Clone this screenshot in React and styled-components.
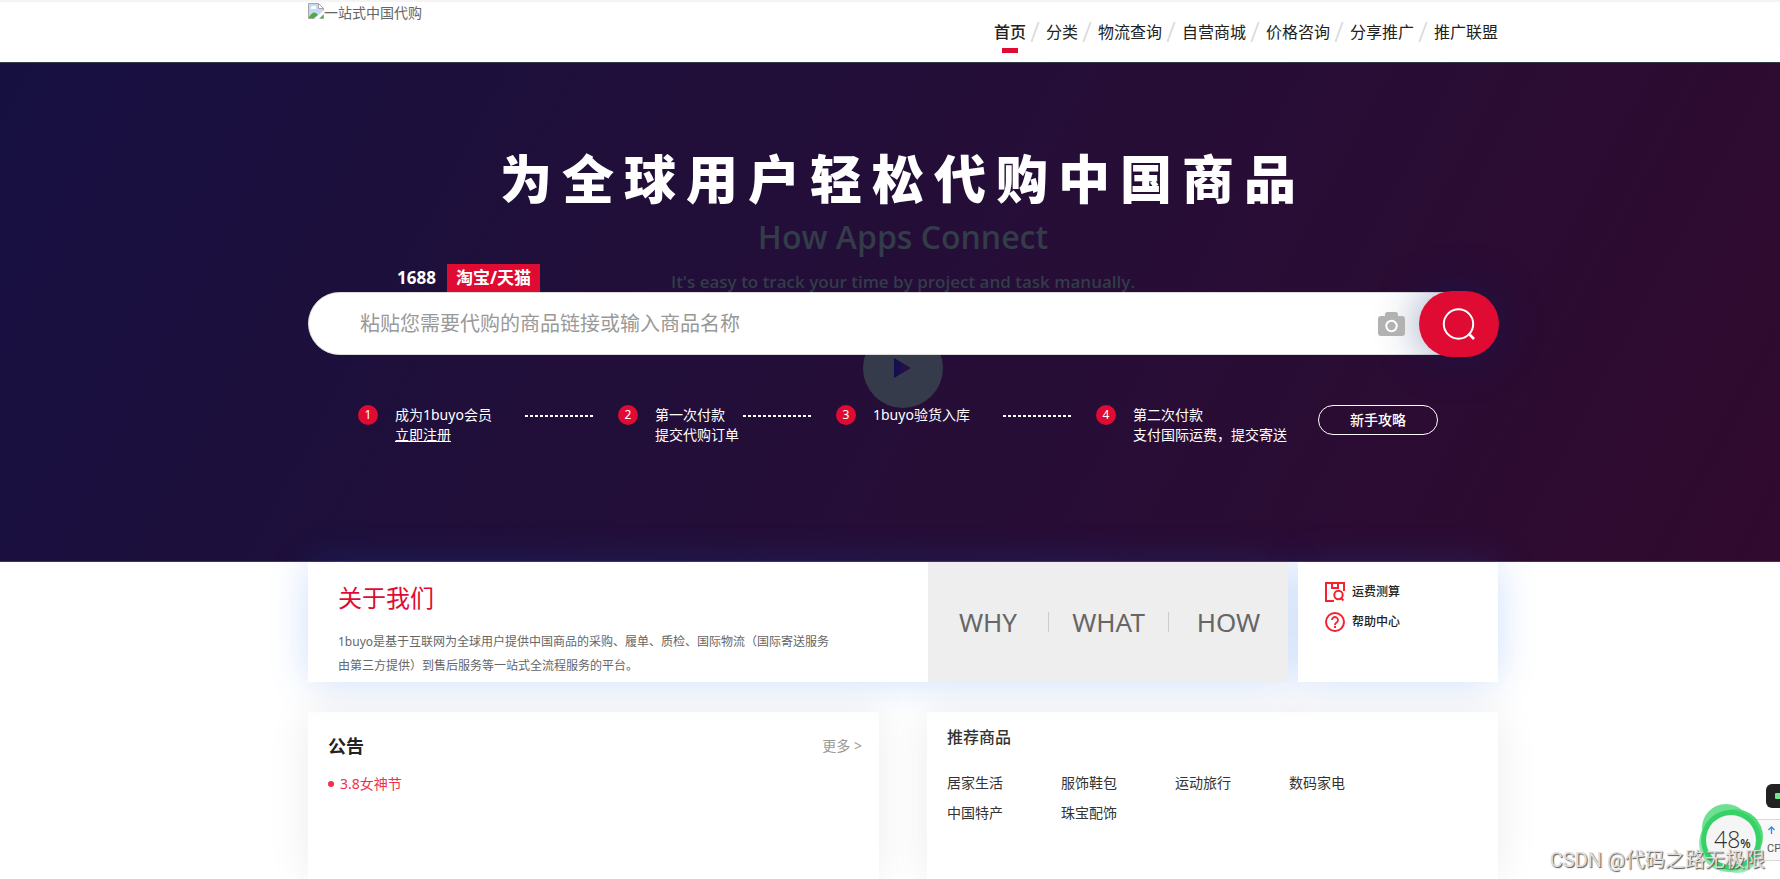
import styled, { createGlobalStyle } from 'styled-components';
import { useState } from 'react';


const GlobalStyle = createGlobalStyle`
    * {
        box-sizing: border-box;
    }
    body {
        margin: 0;
        background-color: #fff;
        color: #333;
        font-family: "Noto Sans", "Noto Sans CJK SC", sans-serif;
        font-size: 14px;
        line-height: 20px;
    }
    a {
        color: inherit;
        text-decoration: none;
    }
    h1, h2, h3, p, ul, ol {
        margin: 0;
        padding: 0;
        list-style: none;
        font-weight: normal;
    }
    button, input {
        font: inherit;
        border: 0;
        padding: 0;
        background: none;
    }
    button {
        cursor: pointer;
    }
`

const Page = styled.div`
    display: flex;
    flex-direction: column;
    min-height: 100vh;
    overflow: hidden;
    position: relative;
`

/* the content column sits a little right of centre */
const Shell = styled.div`
    padding-left: 26px;
    display: flex;
    flex-direction: column;
    flex: ${(props) => (props.$grow ? '1' : 'none')};
`

const Column = styled.div`
    width: 100%;
    max-width: 1190px;
    margin: 0 auto;
`

const Header = styled.header`
    border-top: 2px solid #f4f4f4;
    height: 62px;
`

const HeaderInner = styled(Column)`
    display: flex;
    justify-content: space-between;
`

const Logo = styled.a`
    display: flex;
    font-size: 14px;
    line-height: 22px;
    color: #666;
    svg {
        margin-top: 1px;
    }
`

const Nav = styled.nav`
    display: flex;
    gap: 20px;
    padding-top: 18px;
    font-size: 16px;
    line-height: 24px;
`

const NavLink = styled.a`
    position: relative;
    color: #222;
    font-weight: ${(props) => (props.$active ? 500 : 400)};
    &:not(:first-child)::before {
        content: '';
        position: absolute;
        left: -12px;
        top: 2px;
        width: 2px;
        height: 20px;
        background-color: #ddd;
        transform: skewX(-20deg);
    }
    &::after {
        content: '';
        display: ${(props) => (props.$active ? 'block' : 'none')};
        position: absolute;
        left: 8px;
        bottom: -9px;
        width: 16px;
        height: 5px;
        background-color: #e00b32;
    }
`

const Hero = styled.section`
    position: relative;
    height: 500px;
    border-top: 1px solid #353b4a;
    border-bottom: 1px solid #353b4a;
    background: linear-gradient(118deg, #161042 0%, #1f0f3a 30%, #270d36 62%, #310a2e 100%);
    color: #fff;
`

const Backdrop = styled.div`
    position: absolute;
    inset: 0;
    padding: 151px 0 0 26px;
    display: flex;
    flex-direction: column;
    align-items: center;
    color: #333c49;
    font-family: "Open Sans", sans-serif;
    font-weight: 600;
    svg {
        margin-top: 32px;
    }
`

const BackdropTitle = styled.div`
    font-size: 32px;
    line-height: 46px;
`

const BackdropText = styled.div`
    margin-top: 8px;
    font-size: 17px;
    line-height: 28px;
`

const HeroShell = styled(Shell)`
    position: relative;
`

const Title = styled.h1`
    padding-top: 78px;
    font-size: 52px;
    line-height: 76px;
    font-weight: 900;
    letter-spacing: 10px;
    text-align: center;
`

const Tabs = styled.div`
    display: flex;
    gap: 2px;
    margin-top: 47px;
    padding-left: 80px;
`

const Tab = styled.button`
    height: 28px;
    padding: 0 9px;
    color: #fff;
    font-size: 17px;
    font-weight: 700;
    line-height: 28px;
    background-color: ${(props) => (props.$active ? '#e00b32' : 'transparent')};
`

const SearchBar = styled.form`
    display: flex;
    align-items: center;
    height: 63px;
    border: 1px solid #dcdcdc;
    border-radius: 32px;
    background-color: #fff;
    padding-left: 51px;
`

const SearchInput = styled.input`
    flex: 1;
    min-width: 0;
    height: 61px;
    font-size: 20px;
    color: #333;
    outline: none;
    &::placeholder {
        color: #999;
        opacity: 1;
    }
`

const CameraButton = styled.button`
    position: relative;
    z-index: 1;
    display: flex;
    margin-right: 14px;
`

const SearchButton = styled.button`
    display: flex;
    align-items: center;
    justify-content: center;
    width: 80px;
    height: 66px;
    flex: none;
    margin-right: -2px;
    border-radius: 33px;
    background-color: #e00b32;
    box-shadow: 0 0 46px rgba(10, 32, 100, 0.45);
`

const Steps = styled.div`
    display: flex;
    align-items: flex-start;
    margin-top: 50px;
    padding-left: 50px;
    font-weight: 500;
`

const StepList = styled.ol`
    display: flex;
`

const Step = styled.li`
    display: flex;
`

const Num = styled.span`
    width: 20px;
    height: 20px;
    margin-right: 17px;
    border-radius: 50%;
    background-color: #e00b32;
    font-size: 12px;
    text-align: center;
`

const StepText = styled.div`
    width: ${(props) => props.$width};
    a {
        text-decoration: underline;
    }
`

const Dots = styled.span`
    width: 70px;
    height: 2px;
    margin: 10px 23px 0 0;
    background: repeating-linear-gradient(90deg, #fff 0 3px, transparent 3px 5px);
`

const GuideButton = styled.button`
    width: 120px;
    height: 30px;
    margin-left: 30px;
    border: 1px solid #fff;
    border-radius: 15px;
    color: #fff;
`

const AboutRow = styled(Column)`
    display: flex;
    gap: 10px;
    height: 120px;
    position: relative;
    z-index: 0;
`

const Panel = styled.section`
    position: relative;
    display: flex;
    &::before {
        content: '';
        position: absolute;
        inset: 0;
        z-index: -1;
        box-shadow: 0 0 40px rgba(20, 100, 230, 0.2);
    }
`

const About = styled(Panel)`
    flex: 1;
`

const AboutText = styled.div`
    flex: 1;
    padding: 18px 30px 0;
    background-color: #fff;
    h2 {
        color: #e00b32;
        font-size: 24px;
        line-height: 36px;
    }
    p {
        max-width: 500px;
        margin-top: 14px;
        color: #666;
        font-size: 12px;
        line-height: 24px;
    }
`

const Words = styled.div`
    display: grid;
    grid-template-columns: repeat(3, 120px);
    align-items: center;
    background-color: #eee;
`

const Word = styled.a`
    color: #666;
    font-size: 26px;
    line-height: 20px;
    text-align: center;
    & + & {
        border-left: 1px solid #ccc;
    }
`

const Tools = styled(Panel)`
    width: 200px;
`

const ToolList = styled.div`
    flex: 1;
    display: flex;
    flex-direction: column;
    gap: 10px;
    padding: 20px 27px;
    background-color: #fff;
`

const ToolLink = styled.a`
    display: flex;
    gap: 7px;
    color: #222;
    font-size: 12px;
    font-weight: 500;
`

const CardRow = styled(Column)`
    display: grid;
    grid-template-columns: 1fr 1fr;
    gap: 48px;
    flex: 1;
    margin-top: 30px;
`

const Card = styled.section`
    padding: ${(props) => props.$top} 17px 40px 20px;
    background-color: #fff;
    box-shadow: 0 0 40px rgba(0, 0, 0, 0.08);
`

const CardHead = styled.div`
    display: flex;
    justify-content: space-between;
    align-items: center;
    color: #999;
    h2 {
        color: #222;
        font-size: 18px;
        font-weight: 700;
        line-height: 28px;
    }
`

const Notice = styled.a`
    display: flex;
    align-items: center;
    gap: 6px;
    margin-top: 14px;
    color: #f0304c;
    &::before {
        content: '';
        width: 6px;
        height: 6px;
        border-radius: 50%;
        background-color: #f0304c;
    }
`

const CardTitle = styled.h2`
    color: #333;
    font-size: 16px;
    font-weight: 500;
    line-height: 24px;
`

const Goods = styled.ul`
    display: grid;
    grid-template-columns: repeat(auto-fill, 114px);
    row-gap: 10px;
    margin-top: 24px;
`

/* floating system monitor in the corner of the window */
const Monitor = styled.aside`
    position: absolute;
    right: 0;
    bottom: 0;
    width: 86px;
    height: 100px;
`

const MonitorSvg = styled.svg`
    display: block;
    position: absolute;
    inset: 0;
`

const Percent = styled.span`
    position: absolute;
    left: 20px;
    top: 45px;
    color: #333;
    font-family: "Open Sans", sans-serif;
    font-size: 23px;
    font-weight: 300;
    line-height: 30px;
    white-space: nowrap;
    small {
        font-size: 12px;
        font-weight: 600;
    }
`

const Cpu = styled.span`
    position: absolute;
    left: 73px;
    top: 60px;
    color: #555;
    font-family: Roboto, sans-serif;
    font-size: 11px;
`

const Watermark = styled.div`
    position: absolute;
    right: 15px;
    bottom: 5px;
    color: #ddd;
    font-family: Roboto, "Noto Sans CJK SC", sans-serif;
    font-size: 20px;
    line-height: 28px;
    text-shadow: 1px 1px 1px #555;
`

const navItems = ['首页', '分类', '物流查询', '自营商城', '价格咨询', '分享推广', '推广联盟'];

const steps = [
    { lines: ['成为1buyo会员'], link: '立即注册', width: '130px' },
    { lines: ['第一次付款', '提交代购订单'], width: '88px' },
    { lines: ['1buyo验货入库'], width: '130px' },
    { lines: ['第二次付款', '支付国际运费，提交寄送'], width: '155px' },
];

const goods = ['居家生活', '服饰鞋包', '运动旅行', '数码家电', '中国特产', '珠宝配饰'];


function BrokenImage(){
    return (
        <svg width="16" height="16" viewBox="0 0 16 16" aria-hidden="true">
            <path d="M.5.5h10l5 5v10H.5z" fill="#c4d8f8" stroke="#a5a5a5" />
            <path d="M10.500.5v5h5z" fill="#fff" stroke="#a5a5a5" />
            <path d="M3 6a2 2 0 0 1 2-3 2 2 0 0 1 3 2 1 1 0 0 1 0 1z" fill="#fff" />
            <path d="M1 15v-1q5-8 9-2l-4 3z" fill="#4fac37" />
            <path d="M6 16L16 7v4l-5 5z" fill="#fff" />
            <path d="M12 15l3-3v3z" fill="#4fac37" />
        </svg>
    )
}

function CameraIcon(){
    return (
        <svg width="27" height="24" viewBox="0 0 27 24" aria-hidden="true">
            <path d="M3 4h4V2.500Q7 0 9.500 0h8Q20 0 20 2.500V4h4q3 0 3 3v14q0 3-3 3H3q-3 0-3-3V7q0-3 3-3z" fill="#b2b2b2" />
            <circle cx="13.500" cy="14" r="5.200" fill="none" stroke="#fff" strokeWidth="2" />
        </svg>
    )
}

function SearchIcon(){
    return (
        <svg width="34" height="34" viewBox="0 0 34 34" fill="none" stroke="#fff" strokeWidth="2" aria-hidden="true">
            <circle cx="16.500" cy="17" r="14.700" />
            <path d="M26.500 26.500l5.500 5.500" strokeWidth="2.600" />
        </svg>
    )
}

function FreightIcon(){
    return (
        <svg width="20" height="20" viewBox="0 0 20 20" fill="none" stroke="#f5222d" strokeWidth="2" aria-hidden="true">
            <path d="M9 19H1V1h18v8M7 1v5h6V1" />
            <circle cx="13.500" cy="13" r="4.200" />
            <path d="M15.500 15.500l3 3" />
        </svg>
    )
}

function HelpIcon(){
    return (
        <svg width="20" height="20" viewBox="0 0 20 20" fill="none" stroke="#f5222d" strokeWidth="2" aria-hidden="true">
            <circle cx="10" cy="10" r="9" />
            <path d="M7 8a3 3 0 1 1 4.500 2.600Q10 11.300 10 13" strokeWidth="1.800" />
            <path d="M10 14v2" />
        </svg>
    )
}

function App(){
    const [tab, setTab] = useState('淘宝/天猫');
    const [keyword, setKeyword] = useState('');
    return (
        <Page>
            <GlobalStyle />
            <Header>
                <Shell>
                    <HeaderInner>
                        <Logo href="#"><BrokenImage />一站式中国代购</Logo>
                        <Nav>
                            {navItems.map((item, i) => (
                                <NavLink key={item} href="#" $active={i === 0}>{item}</NavLink>
                            ))}
                        </Nav>
                    </HeaderInner>
                </Shell>
            </Header>
            <Hero>
                <Backdrop>
                    <BackdropTitle>How Apps Connect</BackdropTitle>
                    <BackdropText>It's easy to track your time by project and task manually.</BackdropText>
                    <svg width="80" height="80" viewBox="0 0 80 80" aria-hidden="true">
                        <defs>
                            <linearGradient id="play">
                                <stop offset="0" stopColor="#110d50" />
                                <stop offset="1" stopColor="#2f1040" />
                            </linearGradient>
                        </defs>
                        <circle cx="40" cy="40" r="40" fill="#353b4a" />
                        <path d="M31 30l17 10-17 10z" fill="url(#play)" />
                    </svg>
                </Backdrop>
                <HeroShell>
                    <Column>
                        <Title>为全球用户轻松代购中国商品</Title>
                        <Tabs>
                            {['1688', '淘宝/天猫'].map((name) => (
                                <Tab key={name} $active={tab === name} onClick={()=>{setTab(name)}}>{name}</Tab>
                            ))}
                        </Tabs>
                        <SearchBar onSubmit={(e)=>{e.preventDefault()}}>
                            <SearchInput
                                aria-label="商品搜索"
                                placeholder="粘贴您需要代购的商品链接或输入商品名称"
                                value={keyword}
                                onChange={(e)=>{setKeyword(e.target.value)}}
                            />
                            <CameraButton type="button" aria-label="图片搜索"><CameraIcon /></CameraButton>
                            <SearchButton type="submit" aria-label="搜索"><SearchIcon /></SearchButton>
                        </SearchBar>
                        <Steps>
                            <StepList>
                                {steps.map((step, i) => (
                                    <Step key={step.lines[0]}>
                                        <Num>{i + 1}</Num>
                                        <StepText $width={step.width}>
                                            {step.lines.map((line) => <div key={line}>{line}</div>)}
                                            {step.link && <a href="#">{step.link}</a>}
                                        </StepText>
                                        {i < steps.length - 1 && <Dots />}
                                    </Step>
                                ))}
                            </StepList>
                            <GuideButton>新手攻略</GuideButton>
                        </Steps>
                    </Column>
                </HeroShell>
            </Hero>
            <Shell $grow>
                <AboutRow>
                    <About>
                        <AboutText>
                            <h2>关于我们</h2>
                            <p>1buyo是基于互联网为全球用户提供中国商品的采购、履单、质检、国际物流（国际寄送服务由第三方提供）到售后服务等一站式全流程服务的平台。</p>
                        </AboutText>
                        <Words>
                            <Word href="#">WHY</Word>
                            <Word href="#">WHAT</Word>
                            <Word href="#">HOW</Word>
                        </Words>
                    </About>
                    <Tools>
                        <ToolList>
                            <ToolLink href="#"><FreightIcon />运费测算</ToolLink>
                            <ToolLink href="#"><HelpIcon />帮助中心</ToolLink>
                        </ToolList>
                    </Tools>
                </AboutRow>
                <CardRow>
                    <Card $top="20px">
                        <CardHead>
                            <h2>公告</h2>
                            <a href="#">更多 &gt;</a>
                        </CardHead>
                        <Notice href="#">3.8女神节</Notice>
                    </Card>
                    <Card $top="13px">
                        <CardTitle>推荐商品</CardTitle>
                        <Goods>
                            {goods.map((name) => (
                                <li key={name}><a href="#">{name}</a></li>
                            ))}
                        </Goods>
                    </Card>
                </CardRow>
            </Shell>
            <Monitor>
                <MonitorSvg width="86" height="100" viewBox="0 0 86 100" aria-hidden="true">
                    <rect x="72" y="5" width="24" height="24" rx="6" fill="#222" />
                    <rect x="81" y="14" width="8" height="6" rx="1" fill="#6fe88f" />
                    <rect x="40" y="40.500" width="60" height="41" fill="#f8f8f8" stroke="#d8d8d8" />
                    <path d="M77.500 55v-7M74.500 51l3-3 3 3" fill="none" stroke="#2a8cf0" strokeWidth="1.300" />
                    <circle cx="32" cy="49" r="24" fill="#6fe092" />
                    <circle cx="41" cy="58" r="28" fill="#52d97c" />
                    <circle cx="34" cy="64" r="29" fill="#6fe092" fillOpacity="0.800" />
                    <circle cx="43" cy="70" r="24" fill="#6fe092" fillOpacity="0.700" />
                    <circle cx="37" cy="61" r="30" fill="#36d167" />
                    <circle cx="37" cy="61" r="25" fill="#f5f5f5" />
                </MonitorSvg>
                <Percent>48<small>%</small></Percent>
                <Cpu>CP</Cpu>
            </Monitor>
            <Watermark>CSDN @代码之路无极限</Watermark>
        </Page>
    )
}

export default App;
